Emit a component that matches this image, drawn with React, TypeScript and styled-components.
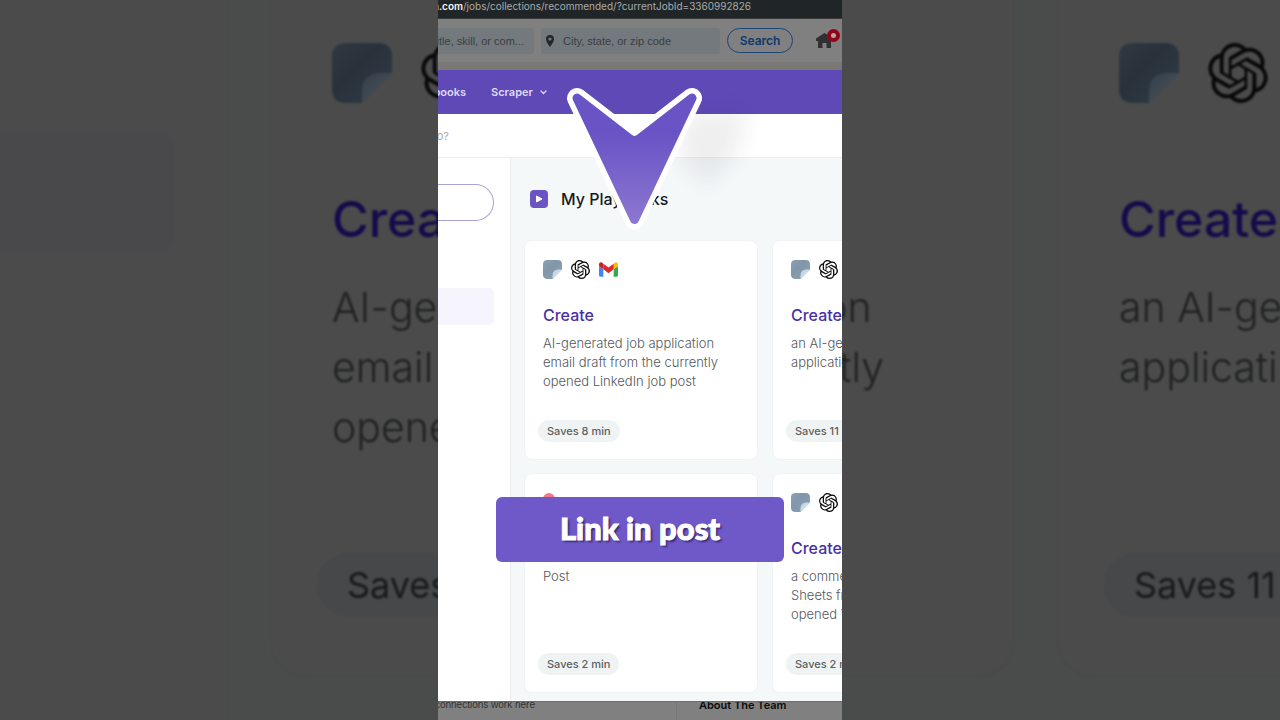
import React from "react";
import styled, { createGlobalStyle } from "styled-components";

const GlobalStyle = createGlobalStyle`
  *, *::before, *::after { box-sizing: border-box; }
  body { margin: 0; background: #4b4b4b; font-family: Inter, "Liberation Sans", sans-serif; }
  h1, h2, p { margin: 0; }
  button, input { font-family: inherit; margin: 0; }
  svg { display: block; flex: none; }
`;

const Page = styled.main`
  position: relative;
  height: 100vh;
  overflow: hidden;
  display: flex;
  justify-content: center;
`;

/* Dimmed, enlarged copy of the cards behind the video */

const Backdrop = styled.div`
  position: absolute;
  inset: 0;
  display: flex;
  overflow: hidden;
  background: #4b4b4b;
  filter: blur(1px);
`;

const BackdropSidebar = styled.div`
  flex: none;
  width: 229px;
  padding: 132px 53px 0 0;
  border-right: 2px solid #484a4a;
`;

const BackdropActive = styled.div`
  height: 120px;
  border-radius: 0 16px 16px 0;
  background: #49494c;
`;

const BackdropCards = styled.div`
  flex: none;
  display: grid;
  grid-template-columns: 744px 744px;
  gap: 43px;
  padding-left: 41px;
  background: #4a4b4b;
`;

const BackdropCard = styled.div`
  display: grid;
  grid-template-rows: 144px 90px 1fr auto;
  height: 677px;
  padding: 43px 61px 59px;
  border: 1px solid #474848;
  border-top: 0;
  border-radius: 0 0 36px 36px;
  background: #4b4b4b;
`;

const Icons = styled.div<{ $gap: number }>`
  display: flex;
  align-items: flex-start;
  gap: ${(p) => p.$gap}px;
`;

const BackdropTitle = styled.p`
  color: #150a4b;
  font-size: 50px;
  font-weight: 500;
  line-height: 64px;
`;

const BackdropText = styled.p`
  color: #1f2020;
  font-size: 41px;
  font-weight: 300;
  line-height: 60px;
  white-space: pre-line;
`;

const BackdropBadge = styled.span`
  justify-self: start;
  margin-left: -15px;
  padding: 0 30px;
  border-radius: 32px;
  background: #46484a;
  color: #171b1a;
  font-size: 36px;
  line-height: 64px;
`;

/* Portrait video frame */

const Frame = styled.section`
  position: relative;
  height: 100%;
  aspect-ratio: 101 / 180;
  display: flex;
  flex-direction: column;
  overflow: hidden;
  background: #808080;
`;

const Clip = styled.div<{ $width: number }>`
  flex: none;
  display: flex;
  justify-content: flex-end;
  width: ${(p) => p.$width}px;
  overflow: hidden;
  white-space: nowrap;
`;

const AddressBar = styled.div`
  flex: none;
  display: flex;
  height: 19px;
  border-bottom: 1px solid #3b3b3b;
  background: #202527;
  color: #a9acad;
  font-size: 10px;
  line-height: 13px;
  white-space: nowrap;

  strong { color: #f4f5f5; font-weight: 600; }
`;

const JobSearch = styled.form`
  flex: none;
  display: flex;
  align-items: center;
  height: 43px;
  background: #808080;
`;

const FieldText = styled.input`
  flex: none;
  width: 200px;
  height: 26px;
  padding: 0 10px 0 0;
  border: 0;
  border-radius: 3px;
  outline: 0;
  background: #74797d;
  color: #3a3e41;
  font-family: "Liberation Sans", sans-serif;
  font-size: 11px;
  text-align: right;

  &::placeholder { color: #3a3e41; opacity: 1; }
`;

const LocationField = styled.label`
  display: flex;
  align-items: center;
  flex: none;
  width: 179px;
  height: 26px;
  margin-left: 7px;
  padding-left: 5px;
  border-radius: 3px;
  background: #74797d;

  ${FieldText} {
    width: 150px;
    margin-left: 9px;
    background: transparent;
    text-align: left;
  }
`;

const SearchButton = styled.button`
  flex: none;
  width: 66px;
  height: 25px;
  margin-left: 7px;
  padding: 0;
  border: 1px solid #1d4474;
  border-radius: 13px;
  background: transparent;
  color: #0a3872;
  font-size: 12px;
  font-weight: 600;
`;

const HomeLink = styled.a`
  position: relative;
  margin-left: 23px;
`;

const Alert = styled.span`
  position: absolute;
  top: -4px;
  right: -7px;
  width: 13px;
  height: 13px;
  border: 4px solid #91051b;
  border-radius: 50%;
  background: #b5a5a7;
`;

const Strip = styled.div`
  flex: none;
  height: 8px;
  background: #797874;
`;

const AppBar = styled.nav`
  flex: none;
  display: flex;
  align-items: center;
  height: 44px;
  background: #5f49b7;
  color: #ded9f3;
  font-size: 11px;
  font-weight: 600;
  line-height: 16px;
`;

const MenuButton = styled.button`
  display: flex;
  align-items: center;
  gap: 7px;
  margin-left: 25px;
  padding: 0;
  border: 0;
  background: none;
  color: inherit;
  font-size: inherit;
  font-weight: inherit;
`;

const Prompt = styled.div`
  flex: none;
  height: 44px;
  border-bottom: 1px solid #eceeef;
  background: #fff;
  color: #a9a9a9;
  font-size: 11px;
  line-height: 44px;
`;

const Body = styled.div`
  flex: 1;
  display: flex;
  min-height: 0;
  overflow: hidden;
`;

const Sidebar = styled.aside`
  flex: none;
  width: 73px;
  padding: 26px 16px 0 0;
  border-right: 1px solid #e9edef;
  background: #fff;
`;

const SidebarSearch = styled.input`
  display: block;
  width: 100%;
  height: 37px;
  border: 1px solid #aaa0d2;
  border-left: 0;
  border-radius: 0 19px 19px 0;
  outline: 0;
  background: #fff;
`;

const SidebarActive = styled.div`
  height: 37px;
  margin-top: 67px;
  border-radius: 0 5px 5px 0;
  background: #f6f4fc;
`;

const Content = styled.div`
  flex: 1;
  min-width: 0;
  padding-left: 13px;
  overflow: hidden;
  background: #f5f8f9;
`;

const ContentTitle = styled.h1`
  display: flex;
  align-items: center;
  gap: 13px;
  height: 82px;
  padding-left: 6px;
  color: #17191c;
  font-size: 16px;
  font-weight: 500;
  line-height: 20px;
`;

const CardGrid = styled.div`
  display: grid;
  grid-template-columns: 234px 234px;
  grid-auto-rows: 220px;
  gap: 13px 14px;
`;

const Card = styled.article`
  display: grid;
  grid-template-rows: 45px 29px 1fr auto;
  padding: 19px 18px 17px;
  border: 1px solid #eff3f4;
  border-radius: 8px;
  background: #fff;
`;

const CardTitle = styled.h2`
  grid-row: 2;
  color: #4a2fa8;
  font-size: 16px;
  font-weight: 500;
  line-height: 20px;
`;

const CardText = styled.p`
  grid-row: 3;
  color: #55585a;
  font-size: 13px;
  font-weight: 300;
  line-height: 19px;
  white-space: pre-line;
`;

const Badge = styled.span`
  grid-row: 4;
  justify-self: start;
  margin-left: -5px;
  padding: 0 9px;
  border-radius: 11px;
  background: #f0f3f4;
  color: #5a5f60;
  font-size: 11px;
  font-weight: 500;
  line-height: 22px;
`;

const PageFooter = styled.footer`
  flex: none;
  display: flex;
  height: 19px;
  overflow: hidden;
  border-top: 1px solid #6c6c6c;
  background: #808080;
  font-size: 10px;
  line-height: 6px;
  white-space: nowrap;
`;

const FooterNote = styled.div`
  flex: none;
  width: 239px;
  border-right: 1px solid #777;
  color: #333;
  font-family: "Liberation Sans", sans-serif;
`;

const FooterText = styled(Clip)`
  overflow: clip;
  overflow-clip-margin: 4px;
`;

const FooterHeading = styled.strong`
  padding-left: 22px;
  color: #0c0c0c;
  font-size: 11px;
  font-weight: 600;
`;

const ArrowOverlay = styled.div`
  position: absolute;
  top: 80px;
  left: 122px;
`;

const Banner = styled.button`
  position: absolute;
  right: 58px;
  bottom: 158px;
  left: 58px;
  height: 65px;
  padding: 0 0 3px;
  border: 0;
  border-radius: 6px;
  background: #6f58c8;
  color: #fff;
  font-family: Lato, "Liberation Sans", sans-serif;
  font-size: 31px;
  font-weight: 900;
  line-height: 62px;
  text-shadow: 2px 2px 2px rgba(20, 10, 60, 0.6);
  -webkit-text-stroke: 1px #fff;
`;

function NoteIcon({ size, id, dim = false }: { size: number; id: string; dim?: boolean }) {
  return (
    <svg width={size} height={size} viewBox="0 0 60 60" aria-hidden="true">
      <defs>
        <linearGradient id={`${id}-a`} x1="0" y1="0" x2="1" y2="1">
          <stop offset="0" stopColor={dim ? "#303942" : "#8ba1b5"} />
          <stop offset="0.4" stopColor={dim ? "#29323b" : "#8096aa"} />
          <stop offset="1" stopColor={dim ? "#303b45" : "#8da5b9"} />
        </linearGradient>
        <linearGradient id={`${id}-b`} x1="0" y1="0" x2="0.6" y2="0.6">
          <stop offset="0" stopColor={dim ? "#353e48" : "#b4c6d6"} />
          <stop offset="1" stopColor={dim ? "#414c57" : "#d8e4ee"} />
        </linearGradient>
      </defs>
      <path d="M14 0H46Q60 0 60 14V30L30 60H14Q0 60 0 46V14Q0 0 14 0Z" fill={`url(#${id}-a)`} />
      <path d="M60 30H48Q30 31 30 48V60Z" fill={`url(#${id}-b)`} />
    </svg>
  );
}

function KnotIcon({ size }: { size: number }) {
  return (
    <svg width={size} height={size} viewBox="0 0 24 24" fill="#080808" aria-hidden="true">
      <path d="M22.2819 9.8211a5.9847 5.9847 0 0 0-.5157-4.9108 6.0462 6.0462 0 0 0-6.5098-2.9A6.0651 6.0651 0 0 0 4.9807 4.1818a5.9847 5.9847 0 0 0-3.9977 2.9 6.0462 6.0462 0 0 0 .7427 7.0966 5.98 5.98 0 0 0 .511 4.9107 6.051 6.051 0 0 0 6.5146 2.9001A5.9847 5.9847 0 0 0 13.2599 24a6.0557 6.0557 0 0 0 5.7718-4.2058 5.9894 5.9894 0 0 0 3.9977-2.9001 6.0557 6.0557 0 0 0-.7475-7.0729zm-9.022 12.6081a4.4755 4.4755 0 0 1-2.8764-1.0408l.1419-.0804 4.7783-2.7582a.7948.7948 0 0 0 .3927-.6813v-6.7369l2.02 1.1686a.071.071 0 0 1 .038.052v5.5826a4.504 4.504 0 0 1-4.4945 4.4944zm-9.6607-4.1254a4.4708 4.4708 0 0 1-.5346-3.0137l.142.0852 4.783 2.7582a.7712.7712 0 0 0 .7806 0l5.8428-3.3685v2.3324a.0804.0804 0 0 1-.0332.0615L9.74 19.9502a4.4992 4.4992 0 0 1-6.1408-1.6464zM2.3408 7.8956a4.485 4.485 0 0 1 2.3655-1.9728V11.6a.7664.7664 0 0 0 .3879.6765l5.8144 3.3543-2.0201 1.1685a.0757.0757 0 0 1-.071 0l-4.8303-2.7865A4.504 4.504 0 0 1 2.3408 7.872zm16.5963 3.8558L13.1038 8.364 15.1192 7.2a.0757.0757 0 0 1 .071 0l4.8303 2.7913a4.4944 4.4944 0 0 1-.6765 8.1042v-5.6772a.79.79 0 0 0-.407-.667zm2.0107-3.0231l-.142-.0852-4.7735-2.7818a.7759.7759 0 0 0-.7854 0L9.409 9.2297V6.8974a.0662.0662 0 0 1 .0284-.0615l4.8303-2.7866a4.4992 4.4992 0 0 1 6.6802 4.66zM8.3065 12.863l-2.02-1.1638a.0804.0804 0 0 1-.038-.0567V6.0742a4.4992 4.4992 0 0 1 7.3757-3.4537l-.142.0805L8.704 5.459a.7948.7948 0 0 0-.3927.6813zm1.0976-2.3654l2.602-1.4998 2.6069 1.4998v2.9994l-2.5974 1.4997-2.6067-1.4997Z" />
    </svg>
  );
}

function MailIcon() {
  return (
    <svg width="19" height="19" viewBox="52 31 88 88" aria-hidden="true">
      <path fill="#4285f4" d="M58 108h14V74L52 59v43c0 3.32 2.69 6 6 6" />
      <path fill="#34a853" d="M120 108h14c3.32 0 6-2.69 6-6V59l-20 15" />
      <path fill="#fbbc04" d="M120 48v26l20-15v-8c0-7.42-8.47-11.65-14.4-7.2" />
      <path fill="#dd2a2a" d="M72 74V48l24 18 24-18v26L96 92" />
      <path fill="#c5221f" d="M52 51v8l20 15V48l-5.6-4.2c-5.94-4.45-14.4-.22-14.4 7.2" />
    </svg>
  );
}

function DotIcon() {
  return (
    <svg width="19" height="19" viewBox="0 0 19 19" aria-hidden="true">
      <circle cx="6" cy="6" r="6" fill="#f2798a" />
    </svg>
  );
}

function PinIcon() {
  return (
    <svg width="8" height="12" viewBox="0 0 8 12" aria-hidden="true">
      <path fillRule="evenodd" fill="#25282a" d="M4 0a4 4 0 0 1 4 4c0 2.400-1.800 5-4 8C1.800 9 0 6.400 0 4a4 4 0 0 1 4-4Zm0 2.400a1.600 1.600 0 1 0 0 3.200 1.600 1.600 0 0 0 0-3.200Z" />
    </svg>
  );
}

function HomeIcon() {
  return (
    <svg width="17" height="15" viewBox="0 0 17 15" aria-hidden="true">
      <path fill="#303030" d="M8.500 0 17 5.500V8h-2v7h-4.500v-5h-4v5H2V8H0V5.500Z" />
    </svg>
  );
}

function PlayIcon() {
  return (
    <svg width="18" height="18" viewBox="0 0 18 18" aria-hidden="true">
      <rect width="18" height="18" rx="4" fill="#6b54c3" />
      <path d="M6.500 6v6l5.500-3Z" fill="#fff" stroke="#fff" strokeLinejoin="round" />
    </svg>
  );
}

function Arrow() {
  const shape = "M17 18 70 59Q74.500 62 79 59L132 18 74.500 139.500Z";
  return (
    <svg width="210" height="160" viewBox="0 0 210 160" aria-hidden="true">
      <defs>
        <linearGradient id="arrow-fill" gradientUnits="userSpaceOnUse" x1="0" y1="14" x2="0" y2="146">
          <stop offset="0.3" stopColor="#6a53c5" />
          <stop offset="1" stopColor="#8d79d1" />
        </linearGradient>
        <filter id="arrow-haze" x="-50%" y="-50%" width="200%" height="200%">
          <feGaussianBlur stdDeviation="11" />
        </filter>
      </defs>
      <path d="M122 36 188 30 174 78 148 106 120 80Z" fill="#303038" opacity="0.08" filter="url(#arrow-haze)" />
      <path d={shape} fill="#fff" stroke="#fff" strokeWidth="20" strokeLinejoin="round" />
      <path d={shape} fill="url(#arrow-fill)" stroke="url(#arrow-fill)" strokeWidth="9" strokeLinejoin="round" />
    </svg>
  );
}

type CardData = {
  id: string;
  apps: string[];
  title?: string;
  text: string;
  saves: string;
};

const cards: CardData[] = [
  {
    id: "email",
    apps: ["note", "knot", "mail"],
    title: "Create",
    text: "AI-generated job application\nemail draft from the currently\nopened LinkedIn job post",
    saves: "Saves 8 min",
  },
  { id: "letter", apps: ["note", "knot"], title: "Create", text: "an AI-generated\napplication", saves: "Saves 11 min" },
  { id: "post", apps: ["dot"], text: "Post", saves: "Saves 2 min" },
  { id: "comment", apps: ["note", "knot"], title: "Create", text: "a comment\nSheets from\nopened YouTube", saves: "Saves 2 min" },
];

function AppIcon({ name, id }: { name: string; id: string }) {
  if (name === "note") return <NoteIcon size={19} id={id} />;
  if (name === "knot") return <KnotIcon size={19} />;
  if (name === "mail") return <MailIcon />;
  return <DotIcon />;
}

export default function App() {
  return (
    <Page>
      <GlobalStyle />
      <Backdrop aria-hidden="true">
        <BackdropSidebar>
          <BackdropActive />
        </BackdropSidebar>
        <BackdropCards>
          {cards.slice(0, 2).map((card) => (
            <BackdropCard key={card.id}>
              <Icons $gap={29}>
                <NoteIcon size={60} id={`back-${card.id}`} dim />
                <KnotIcon size={60} />
              </Icons>
              <BackdropTitle>{card.title}</BackdropTitle>
              <BackdropText>{card.text}</BackdropText>
              <BackdropBadge>{card.saves}</BackdropBadge>
            </BackdropCard>
          ))}
        </BackdropCards>
      </Backdrop>

      <Frame>
        <AddressBar>
          <Clip $width={25}>
            <strong>linkedin.com</strong>
          </Clip>
          <span>/jobs/collections/recommended/?currentJobId=3360992826</span>
        </AddressBar>
        <JobSearch onSubmit={(e) => e.preventDefault()}>
          <Clip $width={96}>
            <FieldText aria-label="Title, skill, or company" placeholder="Title, skill, or com..." />
          </Clip>
          <LocationField>
            <PinIcon />
            <FieldText aria-label="City, state, or zip code" placeholder="City, state, or zip code" />
          </LocationField>
          <SearchButton type="submit">Search</SearchButton>
          <HomeLink href="#home" aria-label="Home">
            <HomeIcon />
            <Alert />
          </HomeLink>
        </JobSearch>
        <Strip />
        <AppBar>
          <Clip $width={28}>Playbooks</Clip>
          <MenuButton type="button">
            Scraper
            <svg width="7" height="5" viewBox="0 0 7 5" fill="none" stroke="currentColor" aria-hidden="true">
              <path d="M1 1 3.500 3.500 6 1" strokeWidth="1.300" strokeLinecap="round" />
            </svg>
          </MenuButton>
        </AppBar>
        <Prompt>
          <Clip $width={11}>do?</Clip>
        </Prompt>
        <Body>
          <Sidebar>
            <SidebarSearch aria-label="Search playbooks" />
            <SidebarActive />
          </Sidebar>
          <Content>
            <ContentTitle>
              <PlayIcon />
              My Playbooks
            </ContentTitle>
            <CardGrid>
              {cards.map((card) => (
                <Card key={card.id}>
                  <Icons $gap={9}>
                    {card.apps.map((name) => (
                      <AppIcon key={name} name={name} id={card.id} />
                    ))}
                  </Icons>
                  {card.title && <CardTitle>{card.title}</CardTitle>}
                  <CardText>{card.text}</CardText>
                  <Badge>{card.saves}</Badge>
                </Card>
              ))}
            </CardGrid>
          </Content>
        </Body>
        <PageFooter>
          <FooterNote>
            <FooterText $width={97}>connections work here</FooterText>
          </FooterNote>
          <FooterHeading>About The Team</FooterHeading>
        </PageFooter>
        <ArrowOverlay>
          <Arrow />
        </ArrowOverlay>
        <Banner type="button">Link in post</Banner>
      </Frame>
    </Page>
  );
}
